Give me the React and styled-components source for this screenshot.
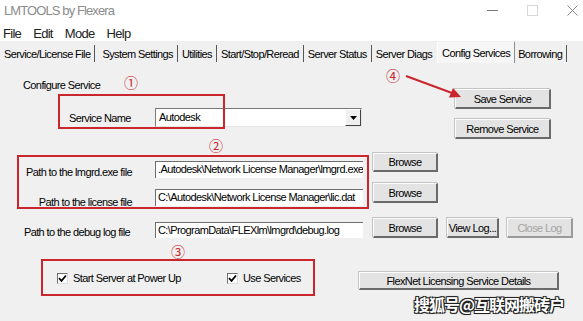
import styled, { createGlobalStyle } from 'styled-components'

const UI_FONT = `"Liberation Sans", Arial, sans-serif`

const GlobalStyle = createGlobalStyle`
  html, body {
    margin: 0;
    padding: 0;
    background: #f0f0f0;
  }
  body {
    font-family: ${UI_FONT};
    font-size: 11px;
    letter-spacing: -0.6px;
    color: #000;
  }
`

const Window = styled.div`
  position: relative;
  width: 583px;
  height: 321px;
  overflow: hidden;
  background: #f0f0f0;
`

const TitleBar = styled.div`
  display: flex;
  align-items: center;
  justify-content: space-between;
  height: 22px;
  padding-left: 4px;
  background: #fff;
`

const Title = styled.span`
  font-size: 13px;
  letter-spacing: -0.9px;
  color: #8c8c8c;
  margin-top: -2px;
`

const WinControls = styled.div`
  display: flex;
  align-items: center;
  gap: 29px;
  padding-right: 5px;
  margin-top: -2px;
`

const MenuBar = styled.div`
  display: flex;
  align-items: center;
  height: 19px;
  padding-left: 3px;
  background: #fff;
  gap: 12px;
`

const MenuItem = styled.span`
  font-size: 13px;
  letter-spacing: -0.7px;
  color: #222;
  margin-top: 3px;
`

const TabStrip = styled.div`
  display: flex;
  align-items: flex-end;
  height: 22px;
  background: #f0f0f0;
`

const Tab = styled.div`
  display: flex;
  align-items: center;
  height: ${p => (p.$active ? 21 : 17)}px;
  margin-bottom: ${p => (p.$active ? 0 : 1)}px;
  padding: 0 ${p => p.$pr ?? 4}px 0 ${p => p.$pl ?? 4}px;
  border-right: 1px solid ${p => (p.$noBorder ? 'transparent' : p.$active ? '#8c8c8c' : '#555')};
  border-left: ${p => (p.$active ? '1px solid #fff' : 'none')};
  background: ${p => (p.$active ? '#f6f6f6' : 'transparent')};
  white-space: nowrap;
`

const Panel = styled.div`
  display: flex;
  flex-direction: column;
`

const TopSection = styled.div`
  display: flex;
`

const LeftColumn = styled.div`
  width: 362px;
  display: flex;
  flex-direction: column;
`

const Heading = styled.div`
  margin: 15px 0 0 23px;
  line-height: 14px;
`

const ServiceRow = styled.div`
  display: flex;
  align-items: center;
  margin: 16px 0 0 69px;
  height: 19px;
`

const Label = styled.div`
  width: ${p => p.$w}px;
  flex: none;
  text-align: ${p => p.$align || 'left'};
  line-height: 14px;
  white-space: nowrap;
`

const Combo = styled.div`
  display: flex;
  width: 207px;
  height: 19px;
  box-sizing: border-box;
  background: #fff;
  border-top: 1px solid #7a7a7a;
  border-left: 1px solid #7a7a7a;
  border-right: 1px solid #e6e6e6;
  border-bottom: 1px solid #e6e6e6;
`

const ComboText = styled.div`
  flex: 1;
  padding: 1px 0 0 3px;
  line-height: 15px;
`

const ComboArrow = styled.div`
  width: 14px;
  display: flex;
  align-items: center;
  justify-content: center;
  background: #f0f0f0;
  border-top: 1px solid #fff;
  border-left: 1px solid #fff;
  border-right: 1px solid #444;
  border-bottom: 1px solid #444;
`

const ButtonColumn = styled.div`
  display: flex;
  flex-direction: column;
  gap: 10px;
  margin: 26px 0 0 93px;
`

const Button = styled.div`
  flex: none;
  box-sizing: border-box;
  width: ${p => p.$w}px;
  height: ${p => p.$h || 20}px;
  margin-left: ${p => p.$ml || 0}px;
  margin-top: ${p => p.$mt || 0}px;
  align-self: ${p => p.$self || 'auto'};
  display: flex;
  align-items: center;
  justify-content: center;
  background: #e3e3e3;
  color: ${p => (p.$disabled ? '#a3a3a3' : '#000')};
  border-top: 1px solid #fdfdfd;
  border-left: 1px solid #fdfdfd;
  border-right: 2px solid ${p => (p.$disabled ? '#9a9a9a' : '#6a6a6a')};
  border-bottom: 2px solid ${p => (p.$disabled ? '#9a9a9a' : '#6a6a6a')};
  box-shadow: -1px -1px 0 #c4c4c4;
  white-space: nowrap;
`

const PathRow = styled.div`
  display: flex;
  align-items: flex-end;
  height: ${p => p.$h}px;
  margin-top: ${p => p.$mt}px;
`

const PathLabel = styled(Label)`
  margin-right: ${p => p.$mr || 23}px;
  margin-bottom: ${p => p.$mb || 0}px;
`

const Field = styled.div`
  flex: none;
  box-sizing: border-box;
  width: 208px;
  height: ${p => p.$h}px;
  padding-left: 2px;
  background: #fff;
  border-top: 1px solid #6e6e6e;
  border-left: 1px solid #6e6e6e;
  line-height: ${p => p.$h - 2}px;
  overflow: hidden;
  white-space: nowrap;
`

const CheckRow = styled.div`
  display: flex;
  align-items: flex-start;
  margin-top: 32px;
`

const CheckItem = styled.label`
  display: flex;
  align-items: center;
  gap: 5px;
  width: ${p => p.$w}px;
  height: 16px;
  padding-left: ${p => p.$pl || 0}px;
  flex: none;
`

const CheckBox = styled.span`
  width: 11px;
  height: 11px;
  box-sizing: border-box;
  background: #fff;
  border-top: 1px solid #6e6e6e;
  border-left: 1px solid #6e6e6e;
  border-right: 1px solid #dcdcdc;
  border-bottom: 1px solid #dcdcdc;
  display: flex;
  align-items: center;
  justify-content: center;
`

const RedBox = styled.div`
  position: absolute;
  left: ${p => p.$x}px;
  top: ${p => p.$y}px;
  width: ${p => p.$w}px;
  height: ${p => p.$h}px;
  box-sizing: border-box;
  border: 2px solid #c9262d;
  pointer-events: none;
`

const Marker = styled.span`
  position: absolute;
  left: ${p => p.$x}px;
  top: ${p => p.$y}px;
  font-family: "Noto Sans CJK SC", "DejaVu Sans", sans-serif;
  font-size: 14px;
  line-height: 14px;
  letter-spacing: 0;
  color: #c9262d;
`

const Arrow = styled.svg`
  position: absolute;
  left: 400px;
  top: 68px;
`

const Watermark = styled.div`
  position: absolute;
  left: 414px;
  top: 292px;
  font-family: "Noto Sans CJK SC", sans-serif;
  font-weight: 700;
  font-size: 16px;
  letter-spacing: -1px;
  color: #fff;
  text-shadow: -1px -1px 0 #222, 1px -1px 0 #222, -1px 1px 0 #222, 1px 1px 0 #222, 0 0 2px #000;
`

const Check = () => (
  <svg width="9" height="9" viewBox="0 0 9 9">
    <path d="M1 4.2 L3.5 6.8 L8 1.5" fill="none" stroke="#000" strokeWidth="1.8" />
  </svg>
)

const tabs = [
  { label: 'Service/License File', pl: 4, pr: 4 },
  { label: 'System Settings', pl: 7 },
  { label: 'Utilities' },
  { label: 'Start/Stop/Reread' },
  { label: 'Server Status' },
  { label: 'Server Diags', noBorder: true },
  { label: 'Config Services', active: true },
  { label: 'Borrowing', pl: 3 },
]

function App() {
  return (
    <Window>
      <GlobalStyle />
      <TitleBar>
        <Title>LMTOOLS by Flexera</Title>
        <WinControls>
          <svg width="11" height="11"><rect y="5" width="11" height="1" fill="#777" /></svg>
          <svg width="11" height="11"><rect x="0.5" y="0.5" width="10" height="10" fill="none" stroke="#d6d6d6" /></svg>
          <svg width="11" height="11"><path d="M0.5 0.5 L10.5 10.5 M10.5 0.5 L0.5 10.5" stroke="#888" /></svg>
        </WinControls>
      </TitleBar>
      <MenuBar>
        <MenuItem>File</MenuItem>
        <MenuItem>Edit</MenuItem>
        <MenuItem>Mode</MenuItem>
        <MenuItem>Help</MenuItem>
      </MenuBar>
      <TabStrip>
        {tabs.map(t => (
          <Tab key={t.label} $active={t.active} $pl={t.pl} $pr={t.pr} $noBorder={t.noBorder}>
            {t.label}
          </Tab>
        ))}
      </TabStrip>
      <Panel>
        <TopSection>
          <LeftColumn>
            <Heading>Configure Service</Heading>
            <ServiceRow>
              <Label $w={86}>Service Name</Label>
              <Combo>
                <ComboText>Autodesk</ComboText>
                <ComboArrow>
                  <svg width="7" height="4"><path d="M0 0 H7 L3.5 4 Z" fill="#000" /></svg>
                </ComboArrow>
              </Combo>
            </ServiceRow>
          </LeftColumn>
          <ButtonColumn>
            <Button $w={96}>Save Service</Button>
            <Button $w={96}>Remove Service</Button>
          </ButtonColumn>
        </TopSection>

        <PathRow $mt={14} $h={25}>
          <PathLabel $w={132} $align="right" $mb={-1}>Path to the lmgrd.exe file</PathLabel>
          <Field $h={17}>.Autodesk\Network License Manager\lmgrd.exe</Field>
          <Button $w={65} $h={19} $ml={10} $self="flex-start">Browse</Button>
        </PathRow>
        <PathRow $mt={5} $h={23}>
          <PathLabel $w={132} $align="right" $mb={-3}>Path to the license file</PathLabel>
          <Field $h={17}>C:\Autodesk\Network License Manager\lic.dat</Field>
          <Button $w={65} $ml={10} $self="flex-start">Browse</Button>
        </PathRow>
        <PathRow $mt={12} $h={20}>
          <PathLabel $w={130} $align="right" $mb={-1} $mr={25}>Path to the debug log file</PathLabel>
          <Field $h={16}>C:\ProgramData\FLEXlm\lmgrd\debug.log</Field>
          <Button $w={65} $ml={10}>Browse</Button>
          <Button $w={52} $ml={9}>View Log...</Button>
          <Button $w={66} $ml={8} $disabled>Close Log</Button>
        </PathRow>

        <CheckRow>
          <CheckItem $w={170} $pl={57}>
            <CheckBox><Check /></CheckBox>
            Start Server at Power Up
          </CheckItem>
          <CheckItem $w={132}>
            <CheckBox><Check /></CheckBox>
            Use Services
          </CheckItem>
          <Button $w={200} $h={18} $mt={2}>FlexNet Licensing Service Details</Button>
        </CheckRow>
      </Panel>

      <RedBox $x={58} $y={94} $w={167} $h={35} />
      <RedBox $x={17} $y={155} $w={352} $h={54} />
      <RedBox $x={41} $y={259} $w={274} $h={37} />
      <Marker $x={124} $y={75}>①</Marker>
      <Marker $x={209} $y={138}>②</Marker>
      <Marker $x={171} $y={244}>③</Marker>
      <Marker $x={386} $y={68}>④</Marker>
      <Arrow width="66" height="34" viewBox="0 0 66 34">
        <line x1="6" y1="8" x2="52" y2="25" stroke="#c9262d" strokeWidth="2" />
        <polygon points="61,29 49,29.5 53,20" fill="#c9262d" />
      </Arrow>
      <Watermark>搜狐号@互联网搬砖户</Watermark>
    </Window>
  )
}

export default App
